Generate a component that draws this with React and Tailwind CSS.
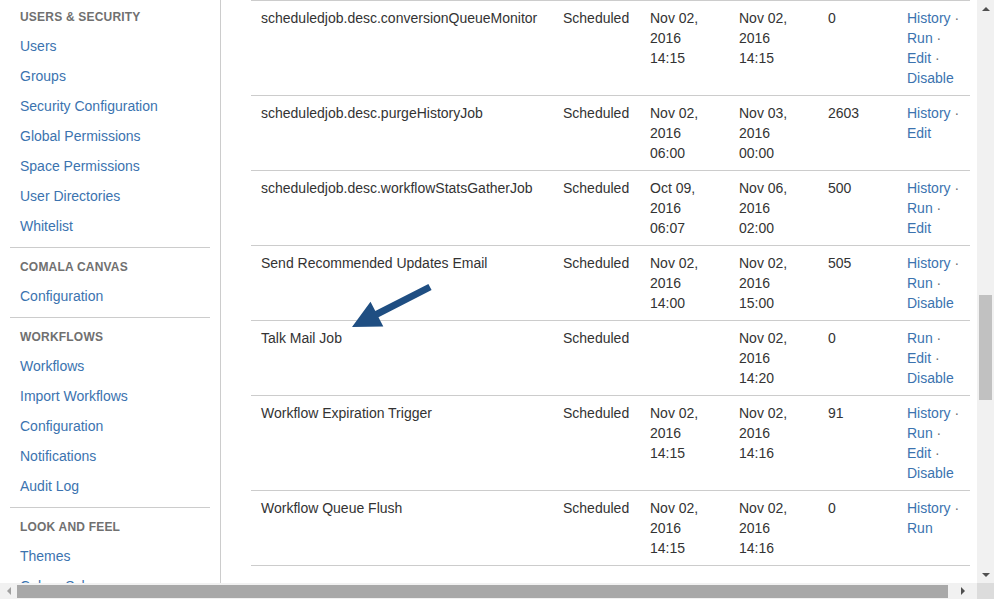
import React from 'react';

const sections = [
  { title: 'Users & Security', items: ['Users', 'Groups', 'Security Configuration', 'Global Permissions', 'Space Permissions', 'User Directories', 'Whitelist'] },
  { title: 'Comala Canvas', items: ['Configuration'] },
  { title: 'Workflows', items: ['Workflows', 'Import Workflows', 'Configuration', 'Notifications', 'Audit Log'] },
  { title: 'Look and Feel', items: ['Themes', 'Colour Scheme'] },
];

const jobs = [
  { name: 'scheduledjob.desc.conversionQueueMonitor', prev: ['Nov 02,', '2016', '14:15'], next: ['Nov 02,', '2016', '14:15'], count: '0', actions: ['History', 'Run', 'Edit', 'Disable'] },
  { name: 'scheduledjob.desc.purgeHistoryJob', prev: ['Nov 02,', '2016', '06:00'], next: ['Nov 03,', '2016', '00:00'], count: '2603', actions: ['History', 'Edit'] },
  { name: 'scheduledjob.desc.workflowStatsGatherJob', prev: ['Oct 09,', '2016', '06:07'], next: ['Nov 06,', '2016', '02:00'], count: '500', actions: ['History', 'Run', 'Edit'] },
  { name: 'Send Recommended Updates Email', prev: ['Nov 02,', '2016', '14:00'], next: ['Nov 02,', '2016', '15:00'], count: '505', actions: ['History', 'Run', 'Disable'] },
  { name: 'Talk Mail Job', prev: [], next: ['Nov 02,', '2016', '14:20'], count: '0', actions: ['Run', 'Edit', 'Disable'] },
  { name: 'Workflow Expiration Trigger', prev: ['Nov 02,', '2016', '14:15'], next: ['Nov 02,', '2016', '14:16'], count: '91', actions: ['History', 'Run', 'Edit', 'Disable'] },
  { name: 'Workflow Queue Flush', prev: ['Nov 02,', '2016', '14:15'], next: ['Nov 02,', '2016', '14:16'], count: '0', actions: ['History', 'Run'] },
];

const Lines = ({ lines }) => (
  <>
    {lines.map((l, i) => (
      <div key={i}>{l}</div>
    ))}
  </>
);

const Sidebar = () => (
  <div className="w-[221px] shrink-0 border-r border-[#cccccc] pt-[2px]">
    {sections.map((s, si) => (
      <div key={s.title}>
        {si > 0 && <div className="mx-[10px] mt-[5px] mb-[4px] h-px bg-[#cccccc]" />}
        <div className="h-[30px] pl-[20px] flex items-center text-[12px] font-bold uppercase text-[#707070] tracking-[0.2px]">{s.title}</div>
        {s.items.map((it) => (
          <div key={it} className="h-[30px] pl-[20px] pb-[2px] flex items-center text-[14px] text-[#3b73af]">{it}</div>
        ))}
      </div>
    ))}
  </div>
);

const Arrow = () => (
  <svg className="absolute left-0 top-0 pointer-events-none" width="977" height="583" viewBox="0 0 977 583">
    <polygon
      points="431.6,290.1 428.4,283.9 375.3,311.1 370.5,301.8 352,327 383.3,326.6 378.5,317.3"
      fill="#1f4e82"
    />
  </svg>
);

const Table = () => (
  <table className="table-fixed border-collapse w-[719px] text-[14px] leading-[20px] text-[#333333]">
    <colgroup>
      <col className="w-[302px]" />
      <col className="w-[87px]" />
      <col className="w-[89px]" />
      <col className="w-[89px]" />
      <col className="w-[79px]" />
      <col className="w-[73px]" />
    </colgroup>
    <tbody>
      {jobs.map((j) => (
        <tr key={j.name} className="border-y border-[#cccccc] align-top">
          <td className="pl-[10px] pt-[7px] pb-[7px] whitespace-nowrap">{j.name}</td>
          <td className="pl-[10px] pt-[7px] pb-[7px]">Scheduled</td>
          <td className="pl-[10px] pt-[7px] pb-[7px]"><Lines lines={j.prev} /></td>
          <td className="pl-[10px] pt-[7px] pb-[7px]"><Lines lines={j.next} /></td>
          <td className="pl-[10px] pt-[7px] pb-[7px]">{j.count}</td>
          <td className="pl-[10px] pt-[7px] pb-[7px] whitespace-nowrap">
            {j.actions.map((a, i) => (
              <div key={a}>
                <span className="text-[#3b73af]">{a}</span>
                {i < j.actions.length - 1 && <span className="text-[#707070]"> ·</span>}
              </div>
            ))}
          </td>
        </tr>
      ))}
    </tbody>
  </table>
);

const App = () => (
  <div className="w-[994px] h-[599px] overflow-hidden flex flex-col bg-white" style={{ fontFamily: '"Liberation Sans", Arial, sans-serif' }}>
    <div className="flex h-[583px]">
      <div className="relative w-[977px] h-[583px] overflow-hidden flex">
        <Sidebar />
        <div className="pl-[30px] pr-[7px]">
          <Table />
        </div>
        <Arrow />
      </div>
      <div className="w-[17px] h-[583px] bg-[#f1f1f1] flex flex-col items-center">
        <div className="h-[17px] flex items-center justify-center">
          <div className="w-0 h-0 border-l-[4px] border-r-[4px] border-b-[4px] border-l-transparent border-r-transparent border-b-[#505050]" />
        </div>
        <div className="h-[278px]" />
        <div className="w-[13px] h-[105px] bg-[#c1c1c1]" />
        <div className="flex-1" />
        <div className="h-[17px] flex items-center justify-center">
          <div className="w-0 h-0 border-l-[4px] border-r-[4px] border-t-[4px] border-l-transparent border-r-transparent border-t-[#505050]" />
        </div>
      </div>
    </div>
    <div className="flex h-[16px]">
      <div className="w-[977px] bg-[#f1f1f1] flex items-center">
        <div className="w-[17px] flex items-center justify-center">
          <div className="w-0 h-0 border-t-[4px] border-b-[4px] border-r-[4px] border-t-transparent border-b-transparent border-r-[#a0a0a0]" />
        </div>
        <div className="w-[931px] h-[13px] bg-[#a8a8a8]" />
        <div className="flex-1 flex items-center justify-center">
          <div className="w-0 h-0 border-t-[4px] border-b-[4px] border-l-[4px] border-t-transparent border-b-transparent border-l-[#505050]" />
        </div>
      </div>
      <div className="w-[17px] bg-[#dcdcdc]" />
    </div>
  </div>
);

export default App;
